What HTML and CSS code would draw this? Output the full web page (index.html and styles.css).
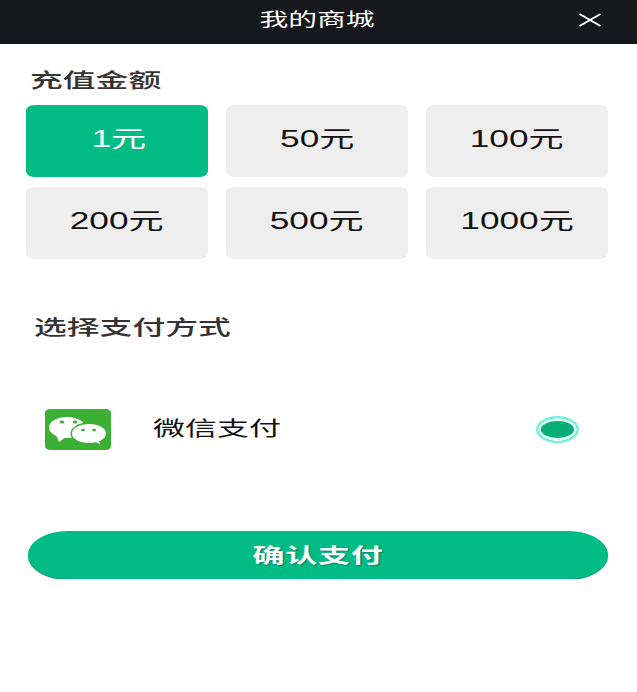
FILE: index.html
```html
<!DOCTYPE html>
<html lang="zh-CN">
<head>
    <meta charset="UTF-8">
    <meta name="viewport" content="width=device-width, initial-scale=1.0">
    <title>我的商城</title>
    <link rel="stylesheet" href="styles.css">
</head>
<body>
    <header class="top-bar">
        <h1 class="top-title"><span class="wide">我的商城</span></h1>
        <button class="close" type="button" aria-label="关闭">
            <svg width="24" height="14" viewBox="0 0 24 14">
                <path d="M1.5 1 L22.5 13 M22.5 1 L1.5 13" stroke="#fff" stroke-width="2" fill="none"/>
            </svg>
        </button>
    </header>

    <main class="container">
        <h2 class="section-title"><span class="wide wide-left">充值金额</span></h2>
        <div class="amounts">
            <div class="amount active"><span class="wide">1元</span></div>
            <div class="amount"><span class="wide">50元</span></div>
            <div class="amount"><span class="wide">100元</span></div>
            <div class="amount"><span class="wide">200元</span></div>
            <div class="amount"><span class="wide">500元</span></div>
            <div class="amount"><span class="wide">1000元</span></div>
        </div>

        <h2 class="section-title pay-title"><span class="wide wide-left">选择支付方式</span></h2>
        <div class="pay-row">
            <svg class="wechat-icon" width="66" height="41" viewBox="0 0 66 41">
                <rect width="66" height="41" rx="5" ry="4" fill="#3cb034"/>
                <ellipse cx="22" cy="18.5" rx="18" ry="10.5" fill="#fff"/>
                <path d="M11 26 L14 33 L21 28 Z" fill="#fff"/>
                <ellipse cx="44" cy="24.5" rx="18.5" ry="11" fill="#3cb034"/>
                <ellipse cx="44" cy="24.5" rx="17" ry="9.5" fill="#fff"/>
                <path d="M48 32 L55 35 L53 30 Z" fill="#fff"/>
                <ellipse cx="17" cy="13" rx="2.4" ry="1.5" fill="#3cb034"/>
                <ellipse cx="30" cy="13" rx="2.4" ry="1.5" fill="#3cb034"/>
                <ellipse cx="38" cy="21" rx="2" ry="1.3" fill="#3cb034"/>
                <ellipse cx="49" cy="21" rx="2" ry="1.3" fill="#3cb034"/>
            </svg>
            <span class="pay-name"><span class="wide wide-left">微信支付</span></span>
            <span class="radio"></span>
        </div>

        <button class="confirm" type="button"><span class="wide">确认支付</span></button>
    </main>
</body>
</html>
```

FILE: styles.css
```css
body {
    margin: 0;
    background-color: #fff;
    font-family: "Liberation Sans", "Noto Sans CJK SC", sans-serif;
    color: #111;
}
.wide {
    display: inline-block;
    transform: scaleX(1.6);
}
.wide-left {
    transform-origin: left center;
}
.top-bar {
    position: relative;
    height: 44px;
    box-sizing: border-box;
    padding: 0 3px 8px 0;
    background-color: #17181c;
    display: flex;
    align-items: center;
    justify-content: center;
}
.top-title {
    margin: 0;
    font-size: 18px;
    font-weight: normal;
    color: #fff;
}
.close {
    position: absolute;
    right: 35px;
    top: 13px;
    padding: 0;
    border: none;
    background: none;
    line-height: 0;
}
.container {
    padding: 25px 29px 0 26px;
}
.section-title {
    margin: 0 0 12px 4px;
    font-size: 20.5px;
    line-height: 24px;
    font-weight: 500;
    color: #333;
}
.amounts {
    display: grid;
    grid-template-columns: repeat(3, 182px);
    grid-auto-rows: 72px;
    column-gap: 18px;
    row-gap: 10px;
}
.amount {
    display: flex;
    align-items: center;
    justify-content: center;
    background-color: #eee;
    border-radius: 8px / 6px;
    font-size: 23px;
    padding-bottom: 9px;
    box-sizing: border-box;
}
.amount .wide {
    transform: scaleX(1.53);
}
.amount.active {
    background-color: #02bb85;
    color: #fff;
    padding-left: 3px;
}
.pay-title {
    margin: 57px 0 0 8px;
}
.pay-row {
    display: flex;
    align-items: center;
    margin-top: 69px;
    padding: 0 29px 0 19px;
}
.wechat-icon {
    flex: none;
}
.pay-name {
    margin-left: 42px;
    padding-bottom: 4px;
    font-size: 20px;
    flex: 1;
}
.radio {
    width: 43px;
    height: 27px;
    box-sizing: border-box;
    border: 2px solid #6ff7df;
    border-radius: 50%;
    background-color: #08ad75;
    box-shadow: inset 0 0 0 3px #dcfbf4;
}
.confirm {
    display: block;
    width: 580px;
    height: 48px;
    margin: 81px 0 0 2px;
    padding: 0 0 1px;
    border: none;
    border-radius: 40px / 24px;
    background-color: #02bb85;
    box-shadow: 0 1px 1px #0b8a66;
    color: #fff;
    font-family: inherit;
    font-size: 20px;
    font-weight: bold;
    letter-spacing: 0.5px;
    text-shadow: 1px 1px 1px #0b8a66;
}
```
